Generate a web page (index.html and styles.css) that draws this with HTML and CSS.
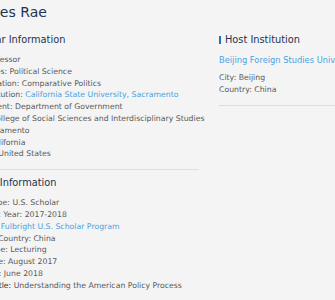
FILE: index.html
```html
<!DOCTYPE html>
<html lang="en">
<head>
    <meta charset="UTF-8">
    <meta name="viewport" content="width=device-width, initial-scale=1.0">
    <title>Charles Rae - Scholar Directory</title>
    <link rel="stylesheet" href="styles.css">
</head>
<body>
    <div class="profile">
        <h1 class="profile-name">Charles Rae</h1>

        <div class="profile-columns">
            <div class="main-col">
                <section class="info-block">
                    <h2 class="section-title">Scholar Information</h2>
                    <ul class="info-list">
                        <li>Title: Professor</li>
                        <li>Disciplines: Political Science</li>
                        <li>Specialization: Comparative Politics</li>
                        <li>U.S. Institution: <a href="#">California State University, Sacramento</a></li>
                        <li>Department: Department of Government</li>
                        <li>Office: College of Social Sciences and Interdisciplinary Studies</li>
                        <li>City: Sacramento</li>
                        <li>State: California</li>
                        <li>Country: United States</li>
                    </ul>
                </section>

                <section class="info-block">
                    <h2 class="section-title">Grant Information</h2>
                    <ul class="info-list">
                        <li>Award Type: U.S. Scholar</li>
                        <li>Academic Year: 2017-2018</li>
                        <li>Program: <a href="#">Fulbright U.S. Scholar Program</a></li>
                        <li>Program Country: China</li>
                        <li>Grant Type: Lecturing</li>
                        <li>Start Date: August 2017</li>
                        <li>End Date: June 2018</li>
                        <li><span class="label-strong">Project Title:</span> Understanding the American Policy Process</li>
                    </ul>
                </section>
            </div>

            <aside class="side-col">
                <section class="info-block">
                    <h2 class="section-title">Host Institution</h2>
                    <a class="host-link" href="#">Beijing Foreign Studies University</a>
                    <ul class="info-list">
                        <li>City: Beijing</li>
                        <li>Country: China</li>
                    </ul>
                </section>
            </aside>
        </div>
    </div>
</body>
</html>
```

FILE: styles.css
```css
/* General page */
body {
    margin: 0;
    background-color: #f4f4f4;
    font-family: "DejaVu Sans", Verdana, sans-serif;
    color: #5a5a5a;
    overflow: hidden;
}

/* Profile wrapper, scrolled slightly to the left */
.profile {
    width: 460px;
    margin-left: -37px;
}

.profile-name {
    margin: 0;
    padding-top: 2px;
    font-size: 14px;
    line-height: 20px;
    font-weight: normal;
    color: #1d3350;
}

/* Two columns */
.profile-columns {
    display: grid;
    grid-template-columns: 236px 1fr;
    gap: 20px;
}

.info-block {
    padding-bottom: 9px;
    border-bottom: 1px solid #dedede;
}

.section-title {
    display: flex;
    align-items: center;
    gap: 4px;
    margin: 11px 0 7px;
    font-size: 9.8px;
    line-height: 14px;
    font-weight: normal;
    color: #1d3350;
}

.section-title::before {
    content: "";
    width: 2px;
    height: 8px;
    background-color: #2a6fbd;
}

.info-block + .info-block .section-title {
    margin-top: 6px;
}

.info-list {
    list-style: none;
    margin: 0;
    padding: 0;
    font-size: 7.75px;
    line-height: 11.8px;
    white-space: nowrap;
}

.label-strong {
    color: #333;
}

a {
    color: #4ba3e0;
    text-decoration: none;
}

/* Host institution link */
.host-link {
    display: block;
    margin-bottom: 6px;
    font-size: 8.3px;
    line-height: 12px;
    white-space: nowrap;
}
```
